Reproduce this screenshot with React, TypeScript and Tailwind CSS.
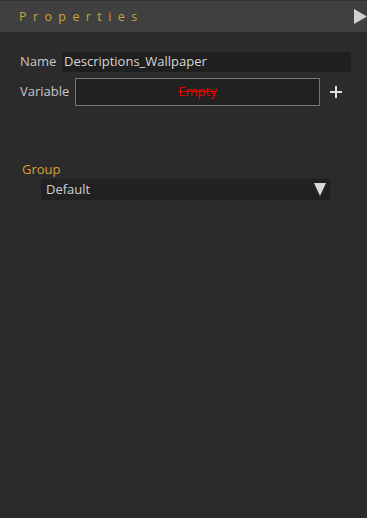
import React from "react";

export default function App() {
  return (
    <div className="w-[367px] h-[518px] bg-[#2b2b2b] overflow-hidden" style={{ fontFamily: '"Open Sans", "Noto Sans", sans-serif' }}>
      <div className="h-[32px] bg-[#404040] border-t border-[#333333] flex items-center pl-[19px] relative">
        <span className="text-[12.5px] tracking-[6.4px] text-[#c9a43a] leading-none mt-[1px]">Properties</span>
        <svg className="absolute right-0 top-[8px]" width="13" height="15" viewBox="0 0 13 15">
          <polygon points="0,0 13,7.5 0,15" fill="#d0d0d0" />
        </svg>
      </div>
      <div className="pt-[20px]">
        <div className="flex items-center h-[20px]">
          <span className="ml-[20px] w-[42px] text-[13px] text-[#c8c8c8]">Name</span>
          <div className="w-[289px] h-[20px] bg-[#1f1f1f] flex items-center pl-[2px] text-[13px] text-[#d6d6d6]">Descriptions_Wallpaper</div>
        </div>
        <div className="flex items-center mt-[6px] h-[28px]">
          <span className="ml-[20px] w-[55px] text-[13px] text-[#c8c8c8]">Variable</span>
          <div className="w-[245px] h-[28px] bg-[#212121] border border-[#777777] flex items-center justify-center text-[13px] text-[#ee0000] line-through">Empty</div>
          <svg className="ml-[10px]" width="12" height="12" viewBox="0 0 12 12">
            <rect x="5" y="0" width="2" height="12" fill="#e0e0e0" />
            <rect x="0" y="5" width="12" height="2" fill="#e0e0e0" />
          </svg>
        </div>
        <div className="mt-[55px] ml-[22px] text-[13px] text-[#d4a03a] leading-[16px]">Group</div>
        <div className="mt-[2px] ml-[41px] w-[289px] h-[21px] bg-[#212121] flex items-center justify-between pl-[5px] pr-[4px]">
          <span className="text-[13px] text-[#d0d0d0]">Default</span>
          <svg width="12" height="13" viewBox="0 0 12 13">
            <polygon points="0,0 12,0 6,13" fill="#d8d8d8" />
          </svg>
        </div>
      </div>
    </div>
  );
}
